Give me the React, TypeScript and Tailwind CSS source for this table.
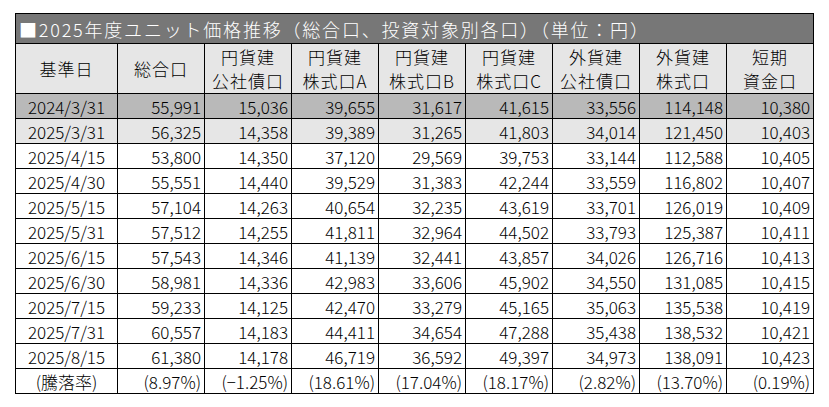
const headers = [
  ["基準日"],
  ["総合口"],
  ["円貨建", "公社債口"],
  ["円貨建", "株式口A"],
  ["円貨建", "株式口B"],
  ["円貨建", "株式口C"],
  ["外貨建", "公社債口"],
  ["外貨建", "株式口"],
  ["短期", "資金口"],
];

const rows = [
  ["2024/3/31", "55,991", "15,036", "39,655", "31,617", "41,615", "33,556", "114,148", "10,380"],
  ["2025/3/31", "56,325", "14,358", "39,389", "31,265", "41,803", "34,014", "121,450", "10,403"],
  ["2025/4/15", "53,800", "14,350", "37,120", "29,569", "39,753", "33,144", "112,588", "10,405"],
  ["2025/4/30", "55,551", "14,440", "39,529", "31,383", "42,244", "33,559", "116,802", "10,407"],
  ["2025/5/15", "57,104", "14,263", "40,654", "32,235", "43,619", "33,701", "126,019", "10,409"],
  ["2025/5/31", "57,512", "14,255", "41,811", "32,964", "44,502", "33,793", "125,387", "10,411"],
  ["2025/6/15", "57,543", "14,346", "41,139", "32,441", "43,857", "34,026", "126,716", "10,413"],
  ["2025/6/30", "58,981", "14,336", "42,983", "33,606", "45,902", "34,550", "131,085", "10,415"],
  ["2025/7/15", "59,233", "14,125", "42,470", "33,279", "45,165", "35,063", "135,538", "10,419"],
  ["2025/7/31", "60,557", "14,183", "44,411", "34,654", "47,288", "35,438", "138,532", "10,421"],
  ["2025/8/15", "61,380", "14,178", "46,719", "36,592", "49,397", "34,973", "138,091", "10,423"],
  ["(騰落率)", "(8.97%)", "(−1.25%)", "(18.61%)", "(17.04%)", "(18.17%)", "(2.82%)", "(13.70%)", "(0.19%)"],
];

const rowBg = (i: number) => {
  if (i === 0) return "bg-[#b9b9b9]";
  if (i === 1) return "bg-[#e6e6e6]";
  return "bg-white";
};

export default function App() {
  return (
    <div className="min-h-screen bg-white pt-[13px] pl-[15px] font-['Noto_Sans_CJK_JP',sans-serif] font-light text-black">
      <table className="table-fixed border-collapse w-[799px] text-[17px] leading-none">
        <colgroup>
          <col className="w-[102px]" />
          {headers.slice(1).map((_, i) => (
            <col key={i} className="w-[87px]" />
          ))}
        </colgroup>
        <thead>
          <tr className="h-[30px]">
            <th
              colSpan={9}
              className="border border-black bg-[#777777] text-white text-left font-light px-[3px] text-[18px] tracking-[1.8px]"
            >
              ■2025年度ユニット価格推移（総合口、投資対象別各口）（単位：円）
            </th>
          </tr>
          <tr className="h-[50px] bg-[#e6e6e6]">
            {headers.map((h, i) => (
              <th key={i} className="border border-black font-light text-center text-[17px] leading-[24px] tracking-[1px] p-0">
                {h.map((line) => (
                  <div key={line}>{line}</div>
                ))}
              </th>
            ))}
          </tr>
        </thead>
        <tbody>
          {rows.map((r, i) => (
            <tr key={i} className={`h-[25px] ${rowBg(i)}`}>
              {r.map((c, j) => (
                <td
                  key={j}
                  className={`border border-black px-[3px] whitespace-nowrap ${j === 0 ? "text-center" : "text-right"}`}
                >
                  {c}
                </td>
              ))}
            </tr>
          ))}
        </tbody>
      </table>
    </div>
  );
}
